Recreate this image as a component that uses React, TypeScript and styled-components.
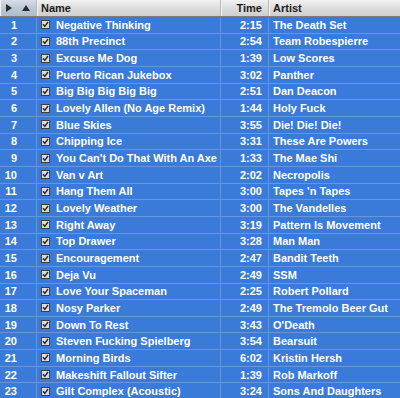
import React, { FC } from 'react'
import styled, { createGlobalStyle } from 'styled-components'

type Track = {
	title: string;
	time: string;
	artist: string;
}

let tracks: Track[] = [
	{ title: 'Negative Thinking', time: '2:15', artist: 'The Death Set' },
	{ title: '88th Precinct', time: '2:54', artist: 'Team Robespierre' },
	{ title: 'Excuse Me Dog', time: '1:39', artist: 'Low Scores' },
	{ title: 'Puerto Rican Jukebox', time: '3:02', artist: 'Panther' },
	{ title: 'Big Big Big Big Big', time: '2:51', artist: 'Dan Deacon' },
	{ title: 'Lovely Allen (No Age Remix)', time: '1:44', artist: 'Holy Fuck' },
	{ title: 'Blue Skies', time: '3:55', artist: 'Die! Die! Die!' },
	{ title: 'Chipping Ice', time: '3:31', artist: 'These Are Powers' },
	{ title: "You Can't Do That With An Axe", time: '1:33', artist: 'The Mae Shi' },
	{ title: 'Van v Art', time: '2:02', artist: 'Necropolis' },
	{ title: 'Hang Them All', time: '3:00', artist: "Tapes 'n Tapes" },
	{ title: 'Lovely Weather', time: '3:00', artist: 'The Vandelles' },
	{ title: 'Right Away', time: '3:19', artist: 'Pattern Is Movement' },
	{ title: 'Top Drawer', time: '3:28', artist: 'Man Man' },
	{ title: 'Encouragement', time: '2:47', artist: 'Bandit Teeth' },
	{ title: 'Deja Vu', time: '2:49', artist: 'SSM' },
	{ title: 'Love Your Spaceman', time: '2:25', artist: 'Robert Pollard' },
	{ title: 'Nosy Parker', time: '2:49', artist: 'The Tremolo Beer Gut' },
	{ title: 'Down To Rest', time: '3:43', artist: "O'Death" },
	{ title: 'Steven Fucking Spielberg', time: '3:54', artist: 'Bearsuit' },
	{ title: 'Morning Birds', time: '6:02', artist: 'Kristin Hersh' },
	{ title: 'Makeshift Fallout Sifter', time: '1:39', artist: 'Rob Markoff' },
	{ title: 'Gilt Complex (Acoustic)', time: '3:24', artist: 'Sons And Daughters' },
]

let GlobalStyle = createGlobalStyle`
	html, body {
		margin: 0;
		padding: 0;
		background: #3a7ad9;
		overflow: hidden;
	}
`

let columns = '37px 184px 48px 1fr'

let Table = styled.div`
	width: 400px;
	height: 398px;
	overflow: hidden;
	font-family: 'Liberation Sans', Arial, sans-serif;
	font-size: 11px;
	font-weight: bold;
`

let Header = styled.div`
	display: grid;
	grid-template-columns: ${columns};
	height: 17px;
	box-sizing: border-box;
	border-bottom: 1px solid #7d7d7d;
	background: linear-gradient(#f2f2f2, #dcdcdc 50%, #cfcfcf);
	color: #1c1c1c;
`

let HeaderCell = styled.div<{ $align?: 'left' | 'right'; $sorted?: boolean }>`
	display: flex;
	align-items: center;
	justify-content: ${p => p.$align === 'right' ? 'flex-end' : 'flex-start'};
	padding: 0 6px 0 4px;
	border-right: 1px solid #b5b5b5;
	box-shadow: inset 1px 0 0 #f6f6f6;
	background: ${p => p.$sorted ? 'linear-gradient(#d6dee8, #bcc8d6 50%, #aebccc)' : 'transparent'};
	&:last-child {
		border-right: none;
	}
`

let SortArrows = styled.div`
	display: flex;
	align-items: center;
	justify-content: space-between;
	width: 100%;
	padding: 0 0 0 2px;
`

let Row = styled.div`
	display: grid;
	grid-template-columns: ${columns};
	height: 16.67px;
	box-sizing: border-box;
	border-bottom: 1px solid #6596e0;
	background: #3a7ad9;
	color: #ffffff;
`

let Cell = styled.div<{ $align?: 'left' | 'right' }>`
	display: flex;
	align-items: center;
	gap: 6px;
	justify-content: ${p => p.$align === 'right' ? 'flex-end' : 'flex-start'};
	border-right: 1px solid #6596e0;
	white-space: nowrap;
	overflow: hidden;
	&:last-child {
		border-right: none;
	}
`

let NumCell = styled(Cell)`
	padding-right: 19px;
`

let NameCell = styled(Cell)`
	padding-left: 4px;
`

let TimeCell = styled(Cell)`
	padding-right: 6px;
`

let ArtistCell = styled(Cell)`
	padding-left: 4px;
`

let CheckBox: FC = () => (
	<svg width="9" height="9" viewBox="0 0 9 9" style={{ flex: 'none' }}>
		<rect x="0.5" y="0.5" width="8" height="8" fill="#dcdcdc" stroke="#404040" />
		<path d="M2 4.3 L3.8 6.3 L7 2" fill="none" stroke="#2a2a2a" strokeWidth="1.4" />
	</svg>
)

export default function App() {
	return (
		<Table>
			<GlobalStyle />
			<Header>
				<HeaderCell $sorted>
					<SortArrows>
						<svg width="6" height="8" viewBox="0 0 6 8">
							<path d="M0 0 L6 4 L0 8 Z" fill="#2a2a2a" />
						</svg>
						<svg width="8" height="6" viewBox="0 0 8 6">
							<path d="M0 6 L4 0 L8 6 Z" fill="#2a2a2a" />
						</svg>
					</SortArrows>
				</HeaderCell>
				<HeaderCell>Name</HeaderCell>
				<HeaderCell $align="right">Time</HeaderCell>
				<HeaderCell>Artist</HeaderCell>
			</Header>
			{tracks.map((t, i) => (
				<Row key={i}>
					<NumCell $align="right">{i + 1}</NumCell>
					<NameCell>
						<CheckBox />
						{t.title}
					</NameCell>
					<TimeCell $align="right">{t.time}</TimeCell>
					<ArtistCell>{t.artist}</ArtistCell>
				</Row>
			))}
		</Table>
	)
}
